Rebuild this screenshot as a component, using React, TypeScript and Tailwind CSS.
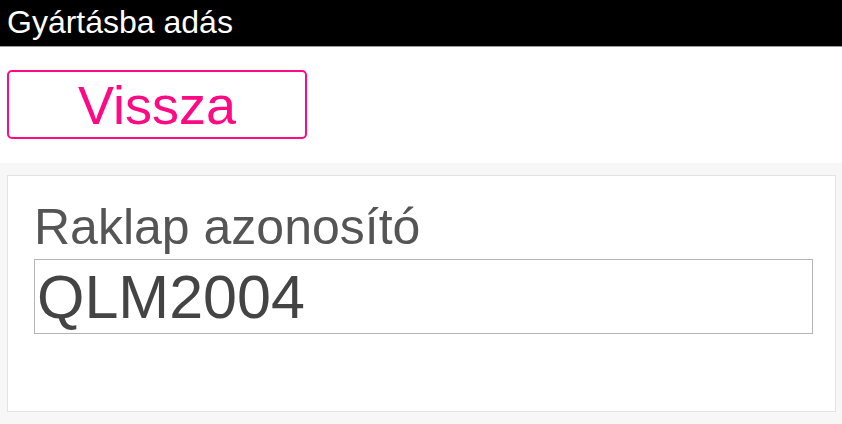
import React, { useState } from 'react';

export default function App() {
  const [raklap, setRaklap] = useState('QLM2004');

  return (
    <div className="flex flex-col h-[424px] w-[842px] bg-[#f7f7f7] font-['Liberation_Sans',Arial,sans-serif]">
      {/* Header */}
      <div className="h-[47px] bg-black border-b border-[#9a9a9a] pl-[7px] pt-[4px]">
        <h1 className="text-white text-[32px] leading-[36px]">Gyártásba adás</h1>
      </div>

      {/* Back button */}
      <div className="bg-white h-[116px] pt-[23px] pl-[7px]">
        <button className="w-[300px] h-[69px] border-2 border-[#ff0a84] rounded-[5px] bg-white text-[#ff0a84] text-[54px] leading-none flex items-center justify-center">
          Vissza
        </button>
      </div>

      {/* Form */}
      <div className="pt-[12px] px-[6px] pl-[7px]">
        <div className="h-[237px] bg-white border border-[#e3e3e3] pt-[23px] pl-[26px]">
          <label className="block text-[#555555] text-[50px] leading-[57px]">Raklap azonosító</label>
          <input
            value={raklap}
            onChange={(e) => setRaklap(e.target.value)}
            className="mt-[3px] w-[779px] h-[75px] border border-[#b5b5b5] px-[2px] text-[#444444] text-[61px] leading-[70px] outline-none bg-white"
          />
        </div>
      </div>
    </div>
  );
}
